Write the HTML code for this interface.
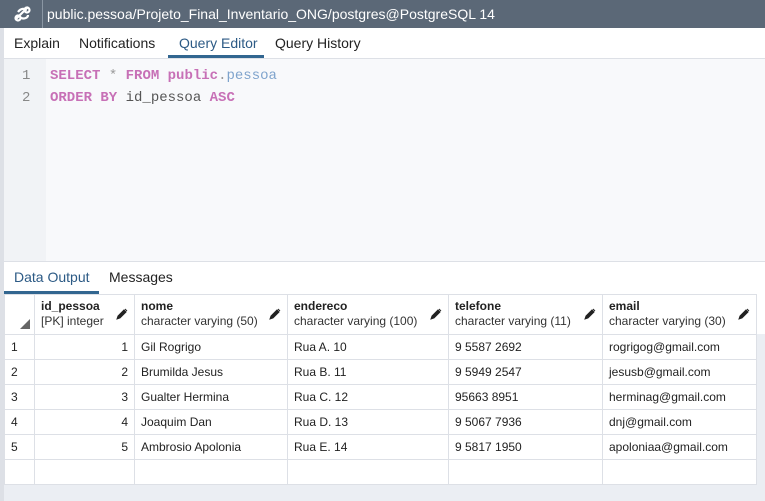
<html><head><style>
body{margin:0;width:765px;height:501px;overflow:hidden;background:#fff;font-family:"Liberation Sans",sans-serif;position:relative}
.abs{position:absolute}
.title{left:0;top:0;width:765px;height:28px;background:#5b6877;color:#fff;font-size:14px}
.tabs span{position:absolute;font-size:14px;color:#222}
.grid{position:absolute;left:4px;top:294px;border-collapse:collapse;font-size:12px;color:#222;table-layout:fixed}
.grid td{border:1px solid #dde0e6;height:24px;padding:0 6px;white-space:nowrap;overflow:hidden;box-sizing:border-box}
.grid tr.r{height:25px}
.grid th{border:1px solid #dde0e6;height:40px;padding:0 6px;text-align:left;font-weight:normal;vertical-align:top;position:relative;background:#fff;box-sizing:border-box}
.grid th b{display:block;margin-top:4px;font-size:12px}
.grid th i{font-style:normal;display:block;color:#333;margin-top:1px}
.pen{position:absolute;right:6px;top:13px;width:12px;height:12px}
code{font-family:"Liberation Mono",monospace}
.k{color:#c770b6;font-weight:bold}
</style></head><body>
<div class="abs" style="left:0;top:28px;width:4px;height:473px;background:#dde0e6"></div>
<div class="abs title">
 <div class="abs" style="left:0;top:0;width:42px;height:28px;border-right:1px solid #8a96a3">
  <svg width="20" height="20" viewBox="0 0 20 20" style="position:absolute;left:13px;top:4px"><g fill="none" stroke="#fff" stroke-width="2.2"><path d="M3 15 L15 3"/><path d="M5 8 C8 4 12 4 13 7"/><path d="M7 13 C10 16 15 14 15 11"/><circle cx="5" cy="14" r="2.5"/><circle cx="14" cy="6" r="2.5"/></g></svg>
 </div>
 <div class="abs" style="left:47px;top:6px">public.pessoa/Projeto_Final_Inventario_ONG/postgres@PostgreSQL 14</div>
</div>
<div class="tabs">
 <span style="left:14px;top:35px">Explain</span>
 <span style="left:79px;top:35px">Notifications</span>
 <span style="left:179px;top:35px;color:#2c5a85">Query Editor</span>
 <span style="left:275px;top:35px">Query History</span>
</div>
<div class="abs" style="left:168px;top:55px;width:96px;height:3px;background:#326690"></div>
<div class="abs" style="left:4px;top:58px;width:761px;height:1px;background:#dde0e6"></div>
<div class="abs" style="left:4px;top:59px;width:42px;height:202px;background:#f1f3f6"></div>
<div class="abs" style="left:46px;top:59px;width:719px;height:202px;background:#f8f9fb"></div>
<div class="abs" style="left:4px;top:261px;width:761px;height:1px;background:#dde0e6"></div>
<div class="abs" style="left:0;top:65px;font-size:14px;line-height:22px;color:#888"><code style="position:absolute;left:22px;">1<br>2</code>
<code style="position:absolute;left:50px;white-space:pre;color:#555"><span class="k">SELECT</span> <span style="color:#999">*</span> <span class="k">FROM</span> <span class="k">public</span><span style="color:#999">.</span><span style="color:#7ea3cc">pessoa</span>
<span class="k">ORDER BY</span> id_pessoa <span class="k">ASC</span></code></div>
<div class="tabs">
 <span style="left:14px;top:269px;color:#2c5a85">Data Output</span>
 <span style="left:109px;top:269px">Messages</span>
</div>
<div class="abs" style="left:4px;top:291px;width:95px;height:3px;background:#326690"></div>
<div class="abs" style="left:4px;top:334px;width:761px;height:167px;background:#ebeef3"></div>
<table class="grid">
<colgroup><col style="width:30px"><col style="width:100px"><col style="width:153px"><col style="width:161px"><col style="width:154px"><col style="width:154px"></colgroup>
<tr style="height:40px"><th><svg width="10" height="10" style="position:absolute;left:15px;top:24px"><path d="M10 0V10H0Z" fill="#666"/></svg></th>
<th><b>id_pessoa</b><i>[PK] integer</i><svg class="pen" viewBox="0 0 12 12"><path d="M1 11l1-3 6-6 2 2-6 6z M9 1l2 2" fill="#222" stroke="#222"/></svg></th>
<th><b>nome</b><i>character varying (50)</i><svg class="pen" viewBox="0 0 12 12"><path d="M1 11l1-3 6-6 2 2-6 6z M9 1l2 2" fill="#222" stroke="#222"/></svg></th>
<th><b>endereco</b><i>character varying (100)</i><svg class="pen" viewBox="0 0 12 12"><path d="M1 11l1-3 6-6 2 2-6 6z M9 1l2 2" fill="#222" stroke="#222"/></svg></th>
<th><b>telefone</b><i>character varying (11)</i><svg class="pen" viewBox="0 0 12 12"><path d="M1 11l1-3 6-6 2 2-6 6z M9 1l2 2" fill="#222" stroke="#222"/></svg></th>
<th><b>email</b><i>character varying (30)</i><svg class="pen" viewBox="0 0 12 12"><path d="M1 11l1-3 6-6 2 2-6 6z M9 1l2 2" fill="#222" stroke="#222"/></svg></th></tr>
<tr class="r" style="background:#fff"><td>1</td><td style="text-align:right">1</td><td>Gil Rogrigo</td><td>Rua A. 10</td><td>9 5587 2692</td><td>rogrigog@gmail.com</td></tr>
<tr class="r" style="background:#fff"><td>2</td><td style="text-align:right">2</td><td>Brumilda Jesus</td><td>Rua B. 11</td><td>9 5949 2547</td><td>jesusb@gmail.com</td></tr>
<tr class="r" style="background:#fff"><td>3</td><td style="text-align:right">3</td><td>Gualter Hermina</td><td>Rua C. 12</td><td>95663 8951</td><td>herminag@gmail.com</td></tr>
<tr class="r" style="background:#fff"><td>4</td><td style="text-align:right">4</td><td>Joaquim Dan</td><td>Rua D. 13</td><td>9 5067 7936</td><td>dnj@gmail.com</td></tr>
<tr class="r" style="background:#fff"><td>5</td><td style="text-align:right">5</td><td>Ambrosio Apolonia</td><td>Rua E. 14</td><td>9 5817 1950</td><td>apoloniaa@gmail.com</td></tr>
<tr class="r" style="background:#fff"><td></td><td></td><td></td><td></td><td></td><td></td></tr>
</table>
</body></html>
